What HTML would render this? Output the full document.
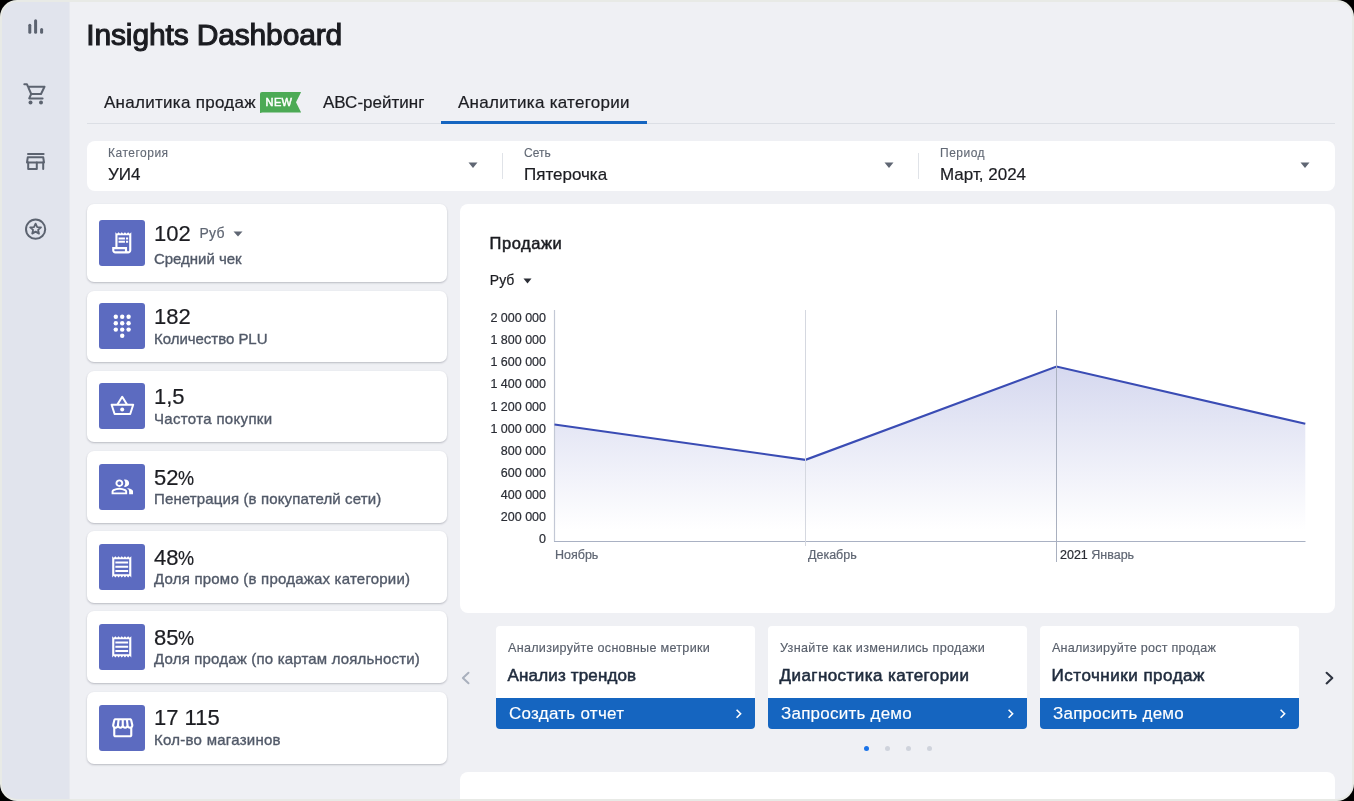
<!DOCTYPE html>
<html><head><meta charset="utf-8">
<style>
*{margin:0;padding:0;box-sizing:border-box}
html,body{width:1354px;height:801px;overflow:hidden;background:#000}
body{font-family:"Liberation Sans",sans-serif;position:relative}
#frame{position:absolute;left:0;top:0;width:1354px;height:801px;background:#e8eae6;border-radius:17px}
#screen{position:absolute;left:0;top:0;width:1354px;height:801px;background:#eff0f4;clip-path:inset(2px round 15px);will-change:transform}
#side{position:absolute;left:0;top:0;width:70px;height:801px;background:#e1e4ed;border-right:1px solid #e7e9ef}
.a{position:absolute}
.t{position:absolute;white-space:nowrap;line-height:1}
.rg{-webkit-text-stroke:0.2px currentColor}
.md{-webkit-text-stroke:0.4px currentColor}
.card{position:absolute;left:87px;width:360px;background:#fff;border-radius:7px;box-shadow:0 1px 2px rgba(60,64,80,.30)}
.tile{position:absolute;left:12px;width:46px;height:46px;background:#5c6bc0;border-radius:3px}
.val{position:absolute;left:67px;font-size:22px;color:#1c1d22;line-height:1;white-space:nowrap;-webkit-text-stroke:0.2px currentColor}
.lab{position:absolute;left:67px;font-size:15px;color:#515968;line-height:1;white-space:nowrap;-webkit-text-stroke:0.35px currentColor}
.promo{position:absolute;top:626px;width:259px;height:103px;background:#fff;border-radius:4px;overflow:hidden}
.promo .sub{position:absolute;left:12px;top:15.6px;font-size:12.6px;color:#585f6b;line-height:1;white-space:nowrap;-webkit-text-stroke:0.15px currentColor}
.promo .ttl{position:absolute;left:11.6px;top:40.8px;font-size:17px;-webkit-text-stroke:0.55px currentColor;color:#1f2b3d;line-height:1;white-space:nowrap}
.promo .btn{position:absolute;left:0;top:72px;width:259px;height:31px;background:#1565c0}
.promo .btn span{position:absolute;left:13px;top:7px;font-size:17px;color:#fff;line-height:1;white-space:nowrap;-webkit-text-stroke:0.15px currentColor}
.promo .btn svg{position:absolute;left:238.8px;top:10.4px}
.ylab{position:absolute;left:0;width:57px;text-align:right;font-size:12.5px;color:#2a2d35;line-height:1;white-space:nowrap;-webkit-text-stroke:0.2px currentColor}
.flab{position:absolute;font-size:12px;color:#626975;line-height:1;white-space:nowrap;-webkit-text-stroke:0.12px currentColor}
.fval{position:absolute;font-size:17px;color:#1c1d22;line-height:1;white-space:nowrap;-webkit-text-stroke:0.2px currentColor}
</style></head><body>
<div id="frame"></div>
<div id="screen">
 <div id="side">
  <svg class="a" style="left:20px;top:10px" width="32" height="32" viewBox="0 0 32 32">
   <g stroke="#5c6370" stroke-width="3" stroke-linecap="round">
    <line x1="9.8" y1="15.3" x2="9.8" y2="22.2"/>
    <line x1="15.6" y1="10.7" x2="15.6" y2="22.2"/>
    <line x1="21.6" y1="19.5" x2="21.6" y2="22.2"/>
   </g>
  </svg>
  <svg class="a" style="left:20px;top:80px" width="32" height="32" viewBox="0 0 32 32">
   <g fill="none" stroke="#5c6370" stroke-width="2" stroke-linecap="round" stroke-linejoin="round">
    <path d="M4.3 4.3 H7 L11.2 14 H21 L24.5 6.7 H8"/>
    <path d="M11.2 14 L9.2 18.4 H22.6"/>
   </g>
   <circle cx="10.5" cy="22.5" r="2" fill="#5c6370"/>
   <circle cx="21" cy="22.5" r="2" fill="#5c6370"/>
  </svg>
  <svg class="a" style="left:20px;top:145px" width="32" height="32" viewBox="0 0 32 32">
   <g fill="none" stroke="#5c6370" stroke-width="2" stroke-linecap="round" stroke-linejoin="round">
    <line x1="8" y1="9" x2="23.6" y2="9"/>
    <path d="M7.8 12.2 H23.2 L24 17.5 H7 Z"/>
    <path d="M8.2 17.5 V24 H16.8 V17.5"/>
    <line x1="23.2" y1="17.5" x2="23.2" y2="24"/>
   </g>
  </svg>
  <svg class="a" style="left:20px;top:213px" width="32" height="32" viewBox="0 0 32 32">
   <circle cx="15.6" cy="16.2" r="9.6" fill="none" stroke="#5c6370" stroke-width="2"/>
   <path d="M15.6 10.6 L17.2 14.1 L21 14.4 L18.1 16.9 L19 20.6 L15.6 18.6 L12.2 20.6 L13.1 16.9 L10.2 14.4 L14 14.1 Z" fill="none" stroke="#5c6370" stroke-width="1.8" stroke-linejoin="round"/>
  </svg>
 </div>

 <div class="t" style="left:86.3px;top:20.2px;font-size:30px;color:#1b1c21;-webkit-text-stroke:1.1px currentColor;letter-spacing:-0.15px">Insights Dashboard</div>

 <!-- tabs -->
 <div class="a" style="left:87px;top:123px;width:1248px;height:1px;background:#dcdfe5"></div>
 <div class="t rg" style="left:104px;top:93.6px;font-size:17px;color:#1c1d22;letter-spacing:0.28px">Аналитика продаж</div>
 <svg class="a" style="left:260px;top:92px" width="42" height="21" viewBox="0 0 42 21">
  <path d="M2 0 H40.6 Q41.2 0 40.9 0.6 L36 10.2 L40.9 19.9 Q41.2 20.5 40.6 20.5 H2.5 Q1 20.5 0.3 21 L0 21 V2 Q0 0 2 0 Z" fill="#4caa55"/>
  <text x="5.6" y="13.6" font-family="Liberation Sans" font-size="11" fill="#fff" stroke="#fff" stroke-width="0.5" letter-spacing="0.35">NEW</text>
 </svg>
 <div class="t rg" style="left:323px;top:93.6px;font-size:17px;color:#1c1d22">АВС-рейтинг</div>
 <div class="t rg" style="left:458px;top:93.6px;font-size:17px;color:#1c1d22;letter-spacing:0.28px">Аналитика категории</div>
 <div class="a" style="left:441px;top:121.4px;width:206px;height:2.4px;background:#1565c0"></div>

 <!-- filter bar -->
 <div class="a" style="left:87px;top:141px;width:1248px;height:50px;background:#fff;border-radius:8px"></div>
 <div class="flab" style="left:108px;top:147px;letter-spacing:0.5px">Категория</div>
 <div class="fval" style="left:108px;top:165.5px">УИ4</div>
 <svg class="a" style="left:468px;top:162px" width="10" height="7"><path d="M0.5 0.5 H9.5 L5 6 Z" fill="#5f6673"/></svg>
 <div class="a" style="left:502px;top:153px;width:1px;height:26px;background:#e0e3e8"></div>
 <div class="flab" style="left:524px;top:147px">Сеть</div>
 <div class="fval" style="left:524px;top:165.5px">Пятерочка</div>
 <svg class="a" style="left:884px;top:162px" width="10" height="7"><path d="M0.5 0.5 H9.5 L5 6 Z" fill="#5f6673"/></svg>
 <div class="a" style="left:918px;top:153px;width:1px;height:26px;background:#e0e3e8"></div>
 <div class="flab" style="left:940px;top:147px;letter-spacing:0.5px">Период</div>
 <div class="fval" style="left:940px;top:165.5px">Март, 2024</div>
 <svg class="a" style="left:1300px;top:162px" width="10" height="7"><path d="M0.5 0.5 H9.5 L5 6 Z" fill="#5f6673"/></svg>

 <!-- left cards -->
 <div class="card" style="top:204px;height:78px">
  <div class="tile" style="top:16px"><svg style="position:absolute;left:10.25px;top:10.25px" width="25.5" height="25.5" viewBox="0 0 24 24"><path fill="#fff" d="M19.5 3.5 18 2l-1.5 1.5L15 2l-1.5 1.5L12 2l-1.5 1.5L9 2 7.5 3.5 6 2v14H3v3c0 1.66 1.34 3 3 3h12c1.66 0 3-1.34 3-3V2l-1.5 1.5zM15 20H6c-.55 0-1-.45-1-1v-1h10v2zm4-1c0 .55-.45 1-1 1s-1-.45-1-1v-3H8V5h11v14z"/><path fill="#fff" d="M9 7h6v2H9zM16 7h2v2h-2zM9 10h6v2H9zM16 10h2v2h-2z"/></svg></div>
  <div class="val" style="top:18.6px">102</div><div class="t rg" style="left:112.5px;top:22.2px;font-size:14px;color:#5f6673;letter-spacing:0.2px">Руб</div><svg class="a" style="left:146px;top:27px" width="10" height="6"><path d="M0.5 0.5 H9.5 L5 5.5 Z" fill="#5f6673"/></svg>
  <div class="lab" style="top:47.4px;letter-spacing:-0.03px">Средний чек</div>
 </div>
 <div class="card" style="top:291px;height:71px">
  <div class="tile" style="top:12px"><svg style="position:absolute;left:7px;top:6px" width="32" height="32" viewBox="0 0 32 32"><g fill="#fff"><circle cx="9.8" cy="7.8" r="2.2"/><circle cx="16.2" cy="7.8" r="2.2"/><circle cx="22.6" cy="7.8" r="2.2"/><circle cx="9.8" cy="14.2" r="2.2"/><circle cx="16.2" cy="14.2" r="2.2"/><circle cx="22.6" cy="14.2" r="2.2"/><circle cx="9.8" cy="20.6" r="2.2"/><circle cx="16.2" cy="20.6" r="2.2"/><circle cx="22.6" cy="20.6" r="2.2"/><circle cx="16.2" cy="26.8" r="2.2"/></g></svg></div>
  <div class="val" style="top:15.4px">182</div>
  <div class="lab" style="top:40.2px;letter-spacing:-0.03px">Количество PLU</div>
 </div>
 <div class="card" style="top:371px;height:71px">
  <div class="tile" style="top:12px"><svg style="position:absolute;left:7px;top:7px" width="32" height="32" viewBox="0 0 32 32"><g fill="none" stroke="#fff" stroke-width="2" stroke-linejoin="round"><path d="M11.4 14.6 L16.2 6.8 L21 14.6"/><path d="M5.6 14.8 H27.2 L24.2 24 H8.6 Z"/></g><circle cx="16.2" cy="19.6" r="2" fill="#fff"/></svg></div>
  <div class="val" style="top:15.4px">1,5</div>
  <div class="lab" style="top:40.2px;letter-spacing:0.33px">Частота покупки</div>
 </div>
 <div class="card" style="top:451px;height:72px">
  <div class="tile" style="top:13px"><svg style="position:absolute;left:7px;top:7px" width="32" height="32" viewBox="0 0 32 32"><g transform="translate(4.6 4.76) scale(0.975 0.93)"><path fill="#fff" d="M1 20v-2.8q0-.85.438-1.563.437-.712 1.162-1.087 1.55-.775 3.15-1.163Q7.35 13 9 13t3.25.387q1.6.388 3.15 1.163.725.375 1.162 1.087Q17 16.35 17 17.2V20Zm18 0v-3q0-1.1-.612-2.113-.613-1.012-1.738-1.737 1.275.15 2.4.512 1.125.363 2.1.888.9.5 1.375 1.112Q23 16.275 23 17v3ZM9 12q-1.650 0-2.825-1.175Q5 9.65 5 8q0-1.65 1.175-2.825Q7.35 4 9 4q1.65 0 2.825 1.175Q13 6.35 13 8q0 1.65-1.175 2.825Q10.65 12 9 12Zm10-4q0 1.65-1.175 2.825Q16.65 12 15 12q-.275 0-.7-.062-.425-.063-.7-.138.675-.8 1.037-1.775Q15 9.05 15 8q0-1.05-.363-2.025Q14.275 5 13.6 4.2q.35-.125.7-.163Q14.65 4 15 4q1.65 0 2.825 1.175Q19 6.35 19 8ZM3 18h12v-.8q0-.275-.137-.5-.138-.225-.363-.35-1.35-.675-2.725-1.013Q10.4 15 9 15t-2.775.337Q4.85 15.675 3.5 16.350q-.225.125-.362.35Q3 16.925 3 17.2Zm6-8q.825 0 1.413-.588Q11 8.825 11 8t-.587-1.412Q9.825 6 9 6q-.825 0-1.412.588Q7 7.175 7 8t.588 1.412Q8.175 10 9 10Z"/></g></svg></div>
  <div class="val" style="top:16.0px">52<span style="display:inline-block;font-size:21px;transform:scaleX(0.86);transform-origin:0 100%">%</span></div>
  <div class="lab" style="top:40.2px;letter-spacing:0.13px">Пенетрация (в покупателй сети)</div>
 </div>
 <div class="card" style="top:531px;height:72px">
  <div class="tile" style="top:13px"><svg style="position:absolute;left:10.25px;top:10.25px" width="25.5" height="25.5" viewBox="0 0 24 24"><path fill="#fff" d="M19.5 3.5L18 2l-1.5 1.5L15 2l-1.5 1.5L12 2l-1.5 1.5L9 2 7.5 3.5 6 2 4.5 3.5 3 2v20l1.5-1.5L6 22l1.5-1.5L9 22l1.5-1.5L12 22l1.5-1.5L15 22l1.5-1.5L18 22l1.5-1.5L21 22V2l-1.5 1.5zM19 19.09H5V4.91h14v14.18zM6 15h12v2H6zm0-4h12v2H6zm0-4h12v2H6z"/></svg></div>
  <div class="val" style="top:16.0px">48<span style="display:inline-block;font-size:21px;transform:scaleX(0.86);transform-origin:0 100%">%</span></div>
  <div class="lab" style="top:40.2px;letter-spacing:0.21px">Доля промо (в продажах категории)</div>
 </div>
 <div class="card" style="top:611px;height:72px">
  <div class="tile" style="top:13px"><svg style="position:absolute;left:10.25px;top:10.25px" width="25.5" height="25.5" viewBox="0 0 24 24"><path fill="#fff" d="M19.5 3.5L18 2l-1.5 1.5L15 2l-1.5 1.5L12 2l-1.5 1.5L9 2 7.5 3.5 6 2 4.5 3.5 3 2v20l1.5-1.5L6 22l1.5-1.5L9 22l1.5-1.5L12 22l1.5-1.5L15 22l1.5-1.5L18 22l1.5-1.5L21 22V2l-1.5 1.5zM19 19.09H5V4.91h14v14.18zM6 15h12v2H6zm0-4h12v2H6zm0-4h12v2H6z"/></svg></div>
  <div class="val" style="top:16.0px">85<span style="display:inline-block;font-size:21px;transform:scaleX(0.86);transform-origin:0 100%">%</span></div>
  <div class="lab" style="top:40.2px;letter-spacing:0.18px">Доля продаж (по картам лояльности)</div>
 </div>
 <div class="card" style="top:691.5px;height:72px">
  <div class="tile" style="top:13px"><svg style="position:absolute;left:10.8px;top:10.25px" width="25.5" height="25.5" viewBox="0 0 24 24"><path fill="#fff" d="M21.9 8.89l-1.05-4.37c-.22-.9-1-1.52-1.91-1.52H5.05c-.9 0-1.69.63-1.9 1.52L2.1 8.89c-.24 1.02-.02 2.06.62 2.88.08.11.19.19.28.29V19c0 1.1.9 2 2 2h14c1.1 0 2-.9 2-2v-6.94c.09-.09.2-.18.28-.28.64-.82.87-1.87.62-2.89zm-2.99-3.9l1.05 4.37c.1.42.01.84-.25 1.17-.14.18-.44.47-.94.47-.61 0-1.140-.49-1.21-1.14L16.98 5l1.93-.01zM13 5h1.96l.54 4.52c.05.39-.07.78-.33 1.07-.22.26-.54.41-.95.41-.67 0-1.22-.59-1.22-1.31V5zM8.490 9.52L9.04 5H11v4.690c0 .72-.55 1.31-1.29 1.31-.34 0-.65-.15-.89-.41-.25-.29-.37-.68-.33-1.07zm-4.45-.16L5.05 5h1.97l-.58 4.86c-.08.65-.6 1.14-1.21 1.14-.49 0-.8-.29-.93-.47-.27-.32-.36-.75-.26-1.17zM5 19v-6.03c.08.01.15.03.23.03.87 0 1.66-.36 2.24-.95.6.6 1.4.95 2.31.95.87 0 1.65-.36 2.23-.93.59.57 1.39.93 2.29.93.84 0 1.64-.35 2.24-.95.58.59 1.37.95 2.24.95.08 0 .15-.02.23-.03V19H5z"/></svg></div>
  <div class="val" style="top:15.0px">17 115</div>
  <div class="lab" style="top:40.2px;letter-spacing:0.26px">Кол-во магазинов</div>
 </div>

 <!-- chart card -->
 <div class="a" style="left:460px;top:204px;width:875px;height:409px;background:#fff;border-radius:8px"></div>
 <div class="t" style="left:489.6px;top:235.2px;font-size:16.5px;color:#1c1d22;letter-spacing:0.55px;-webkit-text-stroke:0.5px currentColor">Продажи</div>
 <div class="t rg" style="left:489.8px;top:272.6px;font-size:14px;color:#1c1d22">Руб</div>
 <svg class="a" style="left:523px;top:278px" width="10" height="7"><path d="M0.5 0.5 H8.5 L4.5 5.5 Z" fill="#2a2d35"/></svg>

 <svg class="a" style="left:460px;top:204px" width="875" height="409" viewBox="460 204 875 409">
  <defs>
   <linearGradient id="fillg" x1="0" y1="366" x2="0" y2="530" gradientUnits="userSpaceOnUse">
    <stop offset="0" stop-color="#d5d8ef"/>
    <stop offset="1" stop-color="#ffffff"/>
   </linearGradient>
  </defs>
  <path d="M554.5 424.5 L805.5 459.8 L1056.5 366.5 L1305.3 423.8 L1305.3 541 L554.5 541 Z" fill="url(#fillg)"/>
  <line x1="554.5" y1="310" x2="554.5" y2="541.5" stroke="#c3c8d5" stroke-width="1.2"/>
  <line x1="554" y1="541.5" x2="1305.5" y2="541.5" stroke="#a9b1c3" stroke-width="1.2"/>
  <path d="M554.5 424.5 L805.5 459.8 L1056.5 366.5 L1305.3 423.8" fill="none" stroke="#3a4cb4" stroke-width="2.1" stroke-linejoin="miter"/>
  <line x1="805.5" y1="310" x2="805.5" y2="546" stroke="#d5d8e0" stroke-width="1"/>
  <line x1="1056.5" y1="310" x2="1056.5" y2="562" stroke="#a9b0bf" stroke-width="1"/>
 </svg>
 <div class="a" style="left:489px;top:0;width:57px;height:801px">
  <div class="ylab" style="top:312.02px">2 000 000</div>
  <div class="ylab" style="top:334.15px">1 800 000</div>
  <div class="ylab" style="top:356.28px">1 600 000</div>
  <div class="ylab" style="top:378.41px">1 400 000</div>
  <div class="ylab" style="top:400.54px">1 200 000</div>
  <div class="ylab" style="top:422.67px">1 000 000</div>
  <div class="ylab" style="top:444.80px">800 000</div>
  <div class="ylab" style="top:466.93px">600 000</div>
  <div class="ylab" style="top:489.06px">400 000</div>
  <div class="ylab" style="top:511.19px">200 000</div>
  <div class="ylab" style="top:533.32px">0</div>
 </div>
 <div class="t rg" style="left:555px;top:548.5px;font-size:12.5px;color:#5f6673">Ноябрь</div>
 <div class="t rg" style="left:808px;top:548.5px;font-size:12.5px;color:#5f6673">Декабрь</div>
 <div class="t rg" style="left:1060px;top:548.5px;font-size:12.5px;color:#2a2d35">2021 <span style="color:#5f6673">Январь</span></div>

 <!-- promo carousel -->
 <svg class="a" style="left:459px;top:670px" width="14" height="16"><path d="M9.5 2.8 L3.9 8 L9.5 13.2" fill="none" stroke="#a9b0bd" stroke-width="2" stroke-linecap="round" stroke-linejoin="round"/></svg>
 <div class="promo" style="left:496px">
  <div class="sub" style="letter-spacing:0.28px">Анализируйте основные метрики</div>
  <div class="ttl" style="letter-spacing:0.15px">Анализ трендов</div>
  <div class="btn"><span style="letter-spacing:0.27px">Создать отчет</span><svg width="8" height="12" viewBox="0 0 8 12"><path d="M1.6 1.8 L5.6 5.8 L1.6 9.8" fill="none" stroke="#fff" stroke-width="1.6"/></svg></div>
 </div>
 <div class="promo" style="left:768px">
  <div class="sub" style="letter-spacing:0.32px">Узнайте как изменились продажи</div>
  <div class="ttl" style="letter-spacing:0.42px">Диагностика категории</div>
  <div class="btn"><span style="letter-spacing:0.23px">Запросить демо</span><svg width="8" height="12" viewBox="0 0 8 12"><path d="M1.6 1.8 L5.6 5.8 L1.6 9.8" fill="none" stroke="#fff" stroke-width="1.6"/></svg></div>
 </div>
 <div class="promo" style="left:1040px">
  <div class="sub" style="letter-spacing:0.22px">Анализируйте рост продаж</div>
  <div class="ttl" style="letter-spacing:0.5px">Источники продаж</div>
  <div class="btn"><span style="letter-spacing:0.23px">Запросить демо</span><svg width="8" height="12" viewBox="0 0 8 12"><path d="M1.6 1.8 L5.6 5.8 L1.6 9.8" fill="none" stroke="#fff" stroke-width="1.6"/></svg></div>
 </div>
 <svg class="a" style="left:1322px;top:670px" width="14" height="16"><path d="M4.6 2.8 L10.3 8.1 L4.6 13.4" fill="none" stroke="#2e3440" stroke-width="2.1" stroke-linecap="round" stroke-linejoin="round"/></svg>
 <div class="a" style="left:863.8px;top:745.5px;width:5.5px;height:5.5px;border-radius:50%;background:#1a73e8"></div>
 <div class="a" style="left:884.8px;top:745.5px;width:5.5px;height:5.5px;border-radius:50%;background:#cfd3dc"></div>
 <div class="a" style="left:905.8px;top:745.5px;width:5.5px;height:5.5px;border-radius:50%;background:#cfd3dc"></div>
 <div class="a" style="left:926.8px;top:745.5px;width:5.5px;height:5.5px;border-radius:50%;background:#cfd3dc"></div>

 <div class="a" style="left:460px;top:772px;width:875px;height:60px;background:#fff;border-radius:8px"></div>
</div>
</body></html>
